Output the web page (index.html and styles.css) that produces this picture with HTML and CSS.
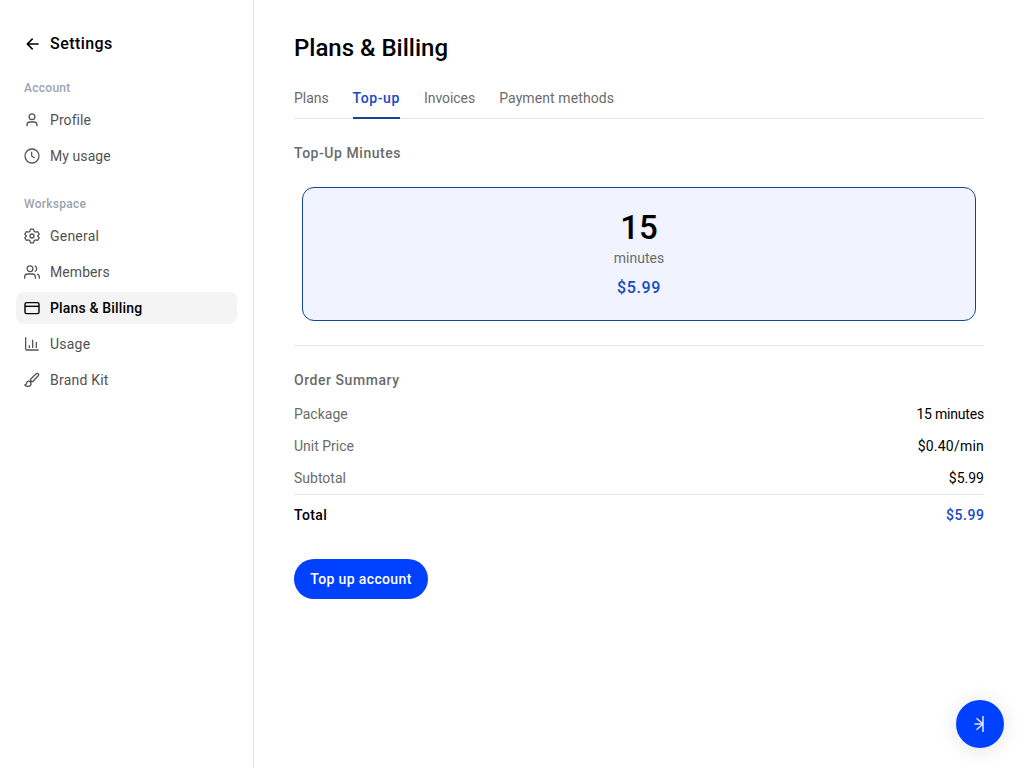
FILE: index.html
```html
<!DOCTYPE html>
<html lang="en">
<head>
  <meta charset="utf-8">
  <meta name="viewport" content="width=device-width,initial-scale=1.0">
  <title>Plans &amp; Billing</title>
  <link rel="stylesheet" href="styles.css">
</head>
<body>
  <div class="app">
    <aside class="sidebar">
      <a class="back">
        <svg class="icon" viewBox="0 0 24 24"><path d="M22 12H5M13 4L5 12l8 8"/></svg>
        <span>Settings</span>
      </a>
      <nav class="group">
        <h6 class="group-title">Account</h6>
        <a class="item">
          <svg class="icon" viewBox="0 0 24 24"><circle cx="12" cy="7" r="4.300"/><path d="M4.500 21.500v-2a4.500 4.500 0 0 1 4.500-4.500h6a4.500 4.500 0 0 1 4.500 4.500v2"/></svg>
          <span>Profile</span>
        </a>
        <a class="item">
          <svg class="icon" viewBox="0 0 24 24"><circle cx="12" cy="12" r="10.500"/><path d="M11.500 5.500v6.500l4.500 3"/></svg>
          <span>My usage</span>
        </a>
      </nav>
      <nav class="group">
        <h6 class="group-title">Workspace</h6>
        <a class="item">
          <svg class="icon" viewBox="0 0 24 24"><circle cx="12" cy="12" r="3"/><path d="M9.800 1.800h4.400l1 3.200 2 1.200 3.400-.7 2.200 3.800L20.500 12l2.300 2.700-2.200 3.800-3.400-.7-2 1.200-1 3.200H9.800l-1-3.200-2-1.200-3.400.7-2.200-3.800L3.500 12 1.200 9.300l2.200-3.800 3.400.7 2-1.200z"/></svg>
          <span class="wide">General</span>
        </a>
        <a class="item">
          <svg class="icon" viewBox="0 0 24 24"><circle cx="9" cy="7" r="4.300"/><path d="M1 22v-2.500a4.500 4.500 0 0 1 4.500-4.500h7a4.500 4.500 0 0 1 4.500 4.500V22M16 2.800a4.400 4.400 0 0 1 0 8.400M19.500 15.200a4.500 4.500 0 0 1 3.500 4.300V22"/></svg>
          <span>Members</span>
        </a>
        <a class="item active">
          <svg class="icon" viewBox="0 0 24 24"><rect x="1.500" y="4" width="21" height="16.500" rx="2.500"/><path d="M1.500 9.500h21"/></svg>
          <span>Plans &amp; Billing</span>
        </a>
        <a class="item">
          <svg class="icon" viewBox="0 0 24 24"><path d="M2.500 2v17a2 2 0 0 0 2 2H22M8 14v4M13 5.500V18M18.500 9v9"/></svg>
          <span class="wide">Usage</span>
        </a>
        <a class="item">
          <svg class="icon" viewBox="0 0 24 24"><path d="M9 11.500l9.300-8.800a2.100 2.100 0 0 1 3 3L12.500 15M6.800 13.800c-1.800 0-3 1.500-3 3.200 0 1.500-1 2.500-2.500 2.700 2.500 3.200 9.200 2.200 9.200-2.200 0-2-1.700-3.700-3.700-3.700zM9 11.500l3.500 3.500"/></svg>
          <span class="wide">Brand Kit</span>
        </a>
      </nav>
    </aside>

    <main class="main">
      <h1 class="page-title">Plans &amp; Billing</h1>
      <div class="tabs">
        <a class="tab">Plans</a>
        <a class="tab current">Top-up</a>
        <a class="tab">Invoices</a>
        <a class="tab last">Payment methods</a>
      </div>

      <section class="topup">
        <h2 class="section-title">Top-Up Minutes</h2>
        <div class="package">
          <div class="package-num">15</div>
          <div class="package-unit">minutes</div>
          <div class="package-price">$5.99</div>
        </div>
      </section>

      <section class="summary">
        <h2 class="section-title">Order Summary</h2>
        <div class="row"><span>Package</span><span class="value narrow">15 minutes</span></div>
        <div class="row"><span>Unit Price</span><span class="value wide">$0.40/min</span></div>
        <div class="row"><span>Subtotal</span><span class="value">$5.99</span></div>
        <div class="row total"><span>Total</span><span class="value">$5.99</span></div>
      </section>
      <button class="btn">Top up account</button>
    </main>
  </div>

  <button class="fab" aria-label="Help">
    <svg viewBox="0 0 16 16"><path d="M11 0v16M2.500 8H11M4.500 2.200L11 8M4.500 13.800L11 8"/></svg>
  </button>
</body>
</html>
```
FILE: styles.css
```css
*{margin:0;padding:0;box-sizing:border-box;}
html,body{
  width:100%;
  height:100%;
}
body{
  font-family: Roboto, "Liberation Sans", sans-serif;
  font-size:14px;
  line-height:20px;
  color:#000;
  background:#fff;
  overflow:hidden;
}
.app{
  display:flex;
  height:100%;
}
.sidebar{
  width:254px;
  flex-shrink:0;
  padding:32px 16px;
  border-right:1px solid #e5e5e5;
}
.icon{
  width:16px;
  height:16px;
  flex-shrink:0;
  fill:none;
  stroke:currentColor;
  stroke-width:1.9;
}
.back{
  display:flex;
  align-items:center;
  gap:10px;
  height:24px;
  padding:0 8px;
  font-size:16px;
  font-weight:500;
  letter-spacing:.45px;
}
.back .icon{
  stroke-width:2.3;
}
.group{
  display:flex;
  flex-direction:column;
  gap:4px;
  margin-top:24px;
}
.group-title{
  height:20px;
  padding:0 8px;
  font-size:12px;
  line-height:16px;
  font-weight:500;
  letter-spacing:.28px;
  color:#9ca3af;
}
.item{
  display:flex;
  align-items:center;
  gap:10px;
  height:32px;
  padding:0 8px;
  border-radius:8px;
  letter-spacing:.08px;
  color:#525252;
}
.wide{
  letter-spacing:.22px;
}
.narrow{
  letter-spacing:-.2px;
}
.item.active{
  color:#000;
  font-weight:500;
  letter-spacing:.17px;
  background:#f4f4f4;
}
.active .icon{
  stroke-width:2.1;
}
.main{
  flex:1;
  padding:32px 40px;
}
.page-title{
  font-size:24px;
  line-height:32px;
  font-weight:500;
}
.tabs{
  display:flex;
  gap:24px;
  height:39px;
  margin-top:16px;
  border-bottom:1px solid #e5e5e5;
}
.tab{
  height:39px;
  padding-top:8px;
  letter-spacing:-.05px;
  color:#6b6b6b;
}
.tab.current{
  color:#1549c4;
  font-weight:500;
  letter-spacing:.6px;
  border-bottom:2px solid #134597;
}
.tab.last{
  letter-spacing:.1px;
}
.section-title{
  font-size:14px;
  line-height:20px;
  font-weight:500;
  letter-spacing:.55px;
  color:#6b6b6b;
}
.topup{
  padding:24px 0;
  border-bottom:1px solid #e5e5e5;
}
.package{
  display:flex;
  flex-direction:column;
  align-items:center;
  height:134px;
  margin:24px 8px 0;
  padding-top:20px;
  border:1px solid #134597;
  border-radius:12px;
  background:#f1f4ff;
}
.package-num{
  font-size:33px;
  line-height:40px;
  font-weight:500;
}
.package-unit{
  color:#6b6b6b;
}
.package-price{
  margin-top:8px;
  font-size:16px;
  line-height:24px;
  font-weight:500;
  letter-spacing:.6px;
  color:#1549c4;
}
.summary{
  padding-top:24px;
}
.row{
  display:flex;
  justify-content:space-between;
  margin-bottom:12px;
  color:#6b6b6b;
}
.section-title + .row{
  margin-top:14px;
}
.row .value{
  color:#000;
}
.row.total{
  margin:-6px 0 0;
  padding-top:10px;
  border-top:1px solid #e5e5e5;
  font-weight:500;
  letter-spacing:.35px;
  color:#000;
}
.total .value{
  letter-spacing:.6px;
  margin-right:-.6px;
  color:#1549c4;
}
.btn{
  width:134px;
  height:40px;
  margin-top:34px;
  border:none;
  border-radius:20px;
  font-family:inherit;
  font-size:14px;
  font-weight:500;
  letter-spacing:.36px;
  color:#fff;
  background:#0040ff;
}
.fab{
  position:absolute;
  right:20px;
  bottom:20px;
  display:flex;
  align-items:center;
  justify-content:center;
  width:48px;
  height:48px;
  border:none;
  border-radius:50%;
  background:#0040ff;
  box-shadow:0 2px 20px rgba(0,0,0,.12);
}
.fab svg{
  width:16px;
  height:16px;
  fill:none;
  stroke:#dfe7ff;
  stroke-width:1.5;
}
```
